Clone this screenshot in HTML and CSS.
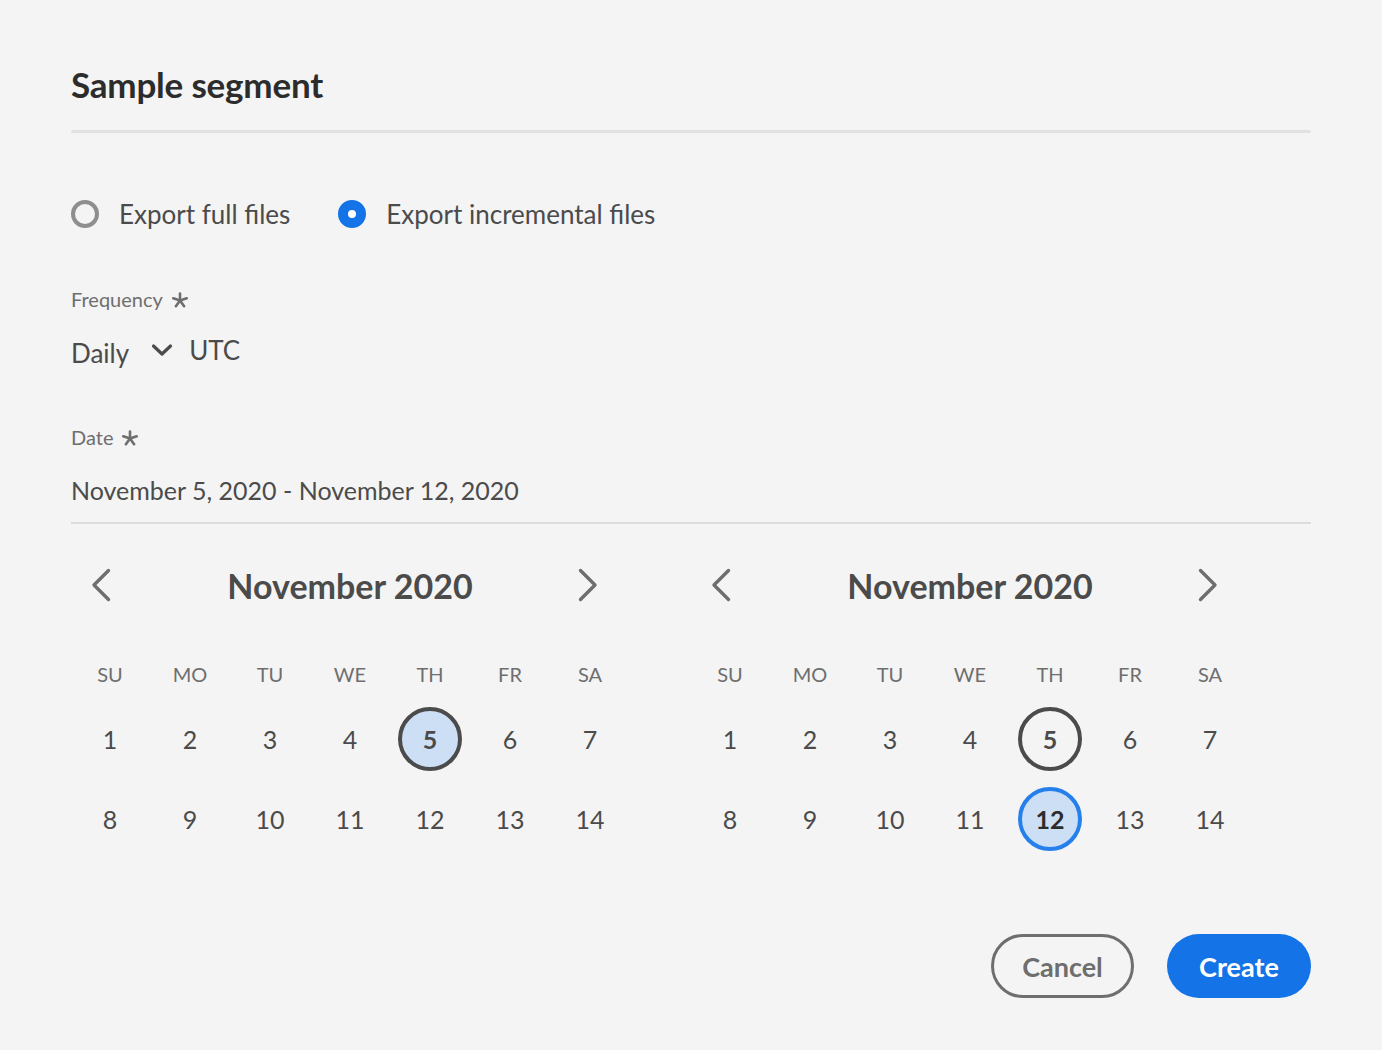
FILE: index.html
```html
<!DOCTYPE html>
<html lang="en">
<head>
<meta charset="utf-8">
<title>Sample segment</title>
<link rel="stylesheet" href="styles.css">
</head>
<body>
<div class="dialog">
  <h1 class="title">Sample segment</h1>
  <div class="divider"></div>

  <div class="radios">
    <label class="radio"><span class="radio-dot"></span><span class="radio-text">Export full files</span></label>
    <label class="radio checked"><span class="radio-dot"></span><span class="radio-text">Export incremental files</span></label>
  </div>

  <div class="field freq">
    <div class="field-label">Frequency
      <svg class="asterisk" viewBox="0 0 16 16" width="16" height="16"><g stroke="#6e6e6e" stroke-width="2.6" stroke-linecap="round"><line x1="8" y1="8.5" x2="8" y2="1.5"/><line x1="8" y1="8.5" x2="14.7" y2="6.3"/><line x1="8" y1="8.5" x2="12.1" y2="14.2"/><line x1="8" y1="8.5" x2="3.9" y2="14.2"/><line x1="8" y1="8.5" x2="1.3" y2="6.3"/></g></svg>
    </div>
    <div class="field-value">
      <span class="select-text">Daily</span>
      <svg class="chev-down" viewBox="0 0 22 14" width="22" height="14"><path d="M2.5 3 L11 11 L19.5 3" fill="none" stroke="#4b4b4b" stroke-width="3.2" stroke-linecap="round" stroke-linejoin="round"/></svg>
      <span class="tz">UTC</span>
    </div>
  </div>

  <div class="field date">
    <div class="field-label">Date
      <svg class="asterisk" viewBox="0 0 16 16" width="16" height="16"><g stroke="#6e6e6e" stroke-width="2.6" stroke-linecap="round"><line x1="8" y1="8.5" x2="8" y2="1.5"/><line x1="8" y1="8.5" x2="14.7" y2="6.3"/><line x1="8" y1="8.5" x2="12.1" y2="14.2"/><line x1="8" y1="8.5" x2="3.9" y2="14.2"/><line x1="8" y1="8.5" x2="1.3" y2="6.3"/></g></svg>
    </div>
    <div class="date-input">November 5, 2020 - November 12, 2020</div>
  </div>

  <div class="calendars">
    <div class="calendar">
      <div class="cal-head">
        <span class="nav prev"><svg viewBox="0 0 20 34" width="20" height="34"><path d="M17.5 2.5 L3 17 L17.5 31.5" fill="none" stroke="#6e6e6e" stroke-width="3.4" stroke-linecap="round" stroke-linejoin="round"/></svg></span>
        <span class="cal-title">November 2020</span>
        <span class="nav next"><svg viewBox="0 0 20 34" width="20" height="34"><path d="M2.5 2.5 L17 17 L2.5 31.5" fill="none" stroke="#6e6e6e" stroke-width="3.4" stroke-linecap="round" stroke-linejoin="round"/></svg></span>
      </div>
      <div class="grid">
        <span class="wd">SU</span><span class="wd">MO</span><span class="wd">TU</span><span class="wd">WE</span><span class="wd">TH</span><span class="wd">FR</span><span class="wd">SA</span>
        <span class="day">1</span><span class="day">2</span><span class="day">3</span><span class="day">4</span><span class="day"><span class="ring sel-start">5</span></span><span class="day">6</span><span class="day">7</span>
        <span class="day">8</span><span class="day">9</span><span class="day">10</span><span class="day">11</span><span class="day">12</span><span class="day">13</span><span class="day">14</span>
      </div>
    </div>
    <div class="calendar">
      <div class="cal-head">
        <span class="nav prev"><svg viewBox="0 0 20 34" width="20" height="34"><path d="M17.5 2.5 L3 17 L17.5 31.5" fill="none" stroke="#6e6e6e" stroke-width="3.4" stroke-linecap="round" stroke-linejoin="round"/></svg></span>
        <span class="cal-title">November 2020</span>
        <span class="nav next"><svg viewBox="0 0 20 34" width="20" height="34"><path d="M2.5 2.5 L17 17 L2.5 31.5" fill="none" stroke="#6e6e6e" stroke-width="3.4" stroke-linecap="round" stroke-linejoin="round"/></svg></span>
      </div>
      <div class="grid">
        <span class="wd">SU</span><span class="wd">MO</span><span class="wd">TU</span><span class="wd">WE</span><span class="wd">TH</span><span class="wd">FR</span><span class="wd">SA</span>
        <span class="day">1</span><span class="day">2</span><span class="day">3</span><span class="day">4</span><span class="day"><span class="ring outline">5</span></span><span class="day">6</span><span class="day">7</span>
        <span class="day">8</span><span class="day">9</span><span class="day">10</span><span class="day">11</span><span class="day"><span class="ring sel-end">12</span></span><span class="day">13</span><span class="day">14</span>
      </div>
    </div>
  </div>

  <div class="actions">
    <button class="btn cancel">Cancel</button>
    <button class="btn create">Create</button>
  </div>
</div>
</body>
</html>
```

FILE: styles.css
```css
* { box-sizing: border-box; }
html, body { margin: 0; padding: 0; background: #f4f4f4; }
body {
  font-family: "Lato", "Open Sans", "Liberation Sans", sans-serif;
  color: #4b4b4b;
  width: 1382px;
  height: 1050px;
  overflow: hidden;
}
.dialog { padding: 64px 71px 0 71px; }

.title {
  margin: 0;
  font-size: 35px;
  line-height: 40px;
  font-weight: 700;
  color: #2c2c2c;
  letter-spacing: -0.2px;
}
.divider { margin-top: 26px; height: 3px; background: #e1e1e1; border-radius: 2px; }

.radios { margin-top: 61px; height: 40px; display: flex; align-items: center; gap: 48px; }
.radio { display: flex; align-items: center; gap: 20px; font-size: 26px; color: #4b4b4b; }
.radio-dot {
  width: 28px; height: 28px; border-radius: 50%;
  border: 4px solid #8e8e8e; background: #f4f4f4; flex: none;
}
.radio.checked .radio-dot { border: 10px solid #1473e6; background: #fff; }

.field-label {
  height: 24px; line-height: 24px; font-size: 20px; color: #6e6e6e;
  display: flex; align-items: center; gap: 9px;
}
.asterisk { display: block; margin-top: 1px; }
.freq { margin-top: 53px; }
.field-value { margin-top: 20px; height: 40px; display: flex; align-items: center; font-size: 26px; color: #4b4b4b; }
.select-text { margin-top: 3px; }
.chev-down { margin-left: 22px; margin-right: 16px; margin-top: -2px; }
.tz { margin-top: -2px; }

.date { margin-top: 54px; }
.date-input {
  margin-top: 21px; height: 54px; line-height: 40px; padding-bottom: 12px;
  font-size: 25px; color: #4b4b4b; border-bottom: 2px solid #dcdcdc;
}

.calendars { margin-top: 37px; display: flex; gap: 60px; margin-left: -1px; }
.calendar { width: 560px; }
.cal-head { height: 48px; display: flex; align-items: center; }
.nav { width: 60px; display: flex; }
.nav.prev { padding-left: 21px; }
.nav.next { padding-left: 8px; }
.nav svg { display: block; }
.cal-title { flex: 1; text-align: center; font-size: 34px; font-weight: 700; color: #4b4b4b; }

.grid { margin-top: 40px; display: grid; grid-template-columns: repeat(7, 80px); grid-template-rows: 50px 80px 80px; }
.wd { display: flex; align-items: center; justify-content: center; font-size: 20px; color: #6e6e6e; }
.day { display: flex; align-items: center; justify-content: center; font-size: 25px; color: #4b4b4b; }
.ring {
  width: 64px; height: 64px; border-radius: 50%;
  display: flex; align-items: center; justify-content: center; font-weight: 700;
}
.sel-start { border: 4px solid #4b4b4b; background: #cddff5; }
.outline { border: 4px solid #4b4b4b; }
.sel-end { border: 4px solid #2680eb; background: #cddff5; color: #2c2c2c; }

.actions { margin-top: 75px; display: flex; justify-content: flex-end; gap: 33px; }
.btn {
  height: 64px; border-radius: 32px; font-family: inherit; font-size: 27px; font-weight: 700;
  padding: 0; cursor: pointer;
}
.cancel { width: 143px; border: 3px solid #6e6e6e; background: transparent; color: #6e6e6e; }
.create { width: 144px; border: none; background: #1473e6; color: #fff; }
```
